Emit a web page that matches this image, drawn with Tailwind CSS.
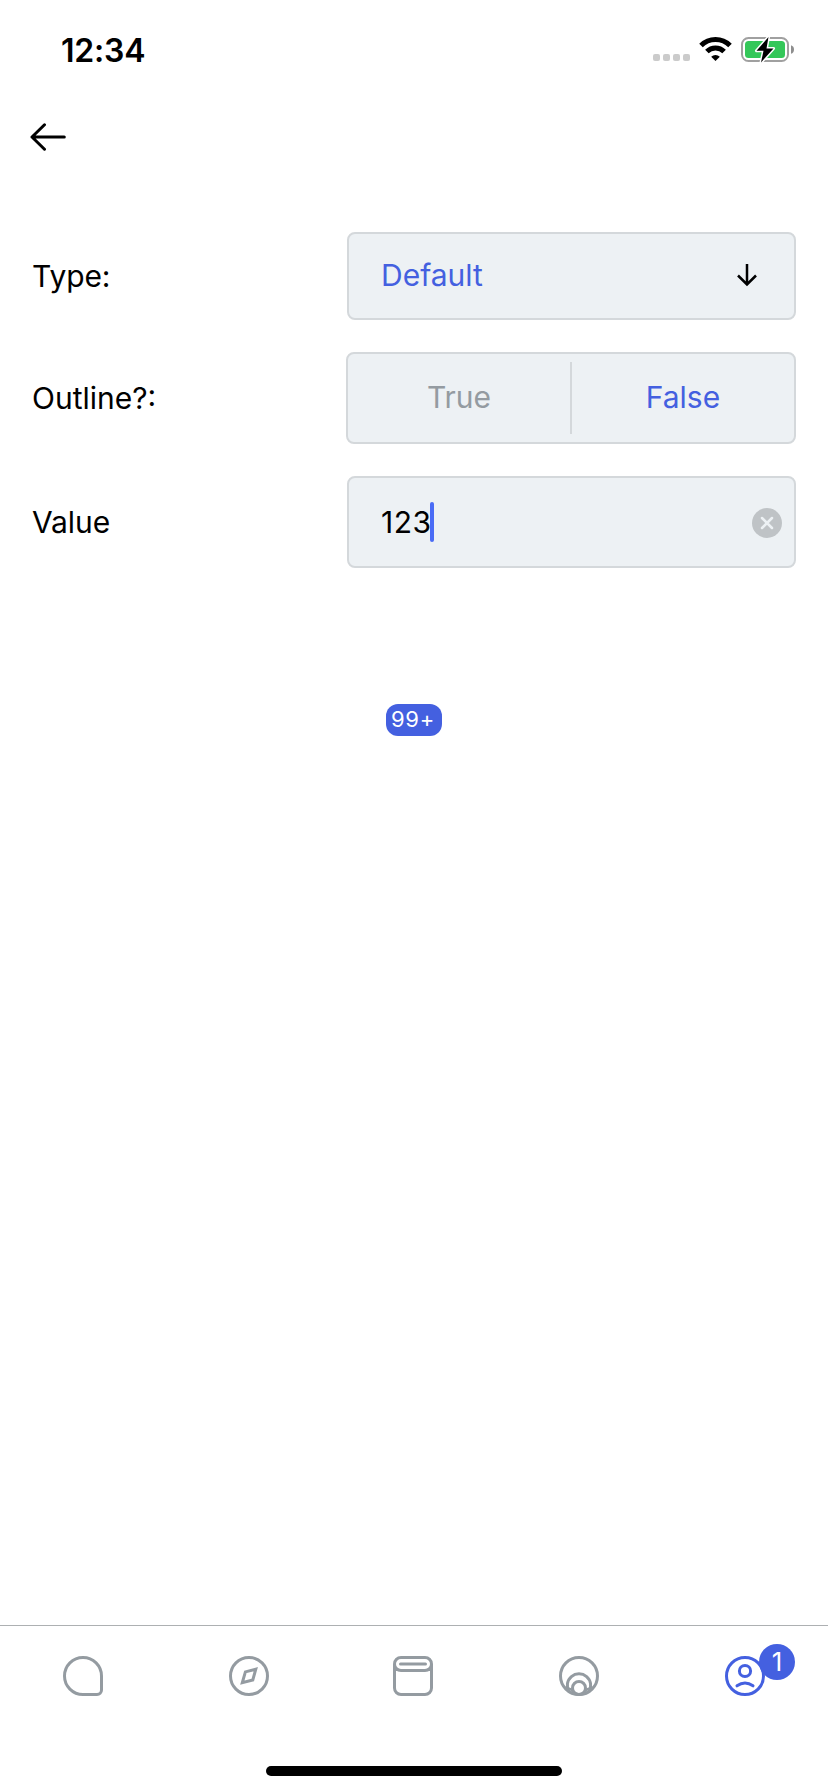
<!DOCTYPE html>
<html lang="en">
<head>
<meta charset="utf-8">
<title>Badge settings</title>
<script src="https://cdn.jsdelivr.net/npm/@tailwindcss/browser@4"></script>
</head>
<body class="w-[828px] h-[1792px] overflow-hidden bg-white flex flex-col text-black text-[30px] leading-[36px] font-normal antialiased font-['Inter',sans-serif]">
  <!-- Status bar -->
  <header class="h-[96px] shrink-0 flex items-start justify-between pl-[61px] pr-[34px]">
    <div class="pt-[31px] text-[32px] leading-[40px] font-semibold tracking-[-0.2px]">12:34</div>
    <div class="pt-[36px] flex items-start">
      <svg class="w-[38px] h-[28px]" viewBox="0 0 38 28" fill="#cbcbcb"><rect x="0" y="18" width="7" height="7" rx="2"/><rect x="10" y="18" width="7" height="7" rx="2"/><rect x="20" y="18" width="7" height="7" rx="2"/><rect x="30" y="18" width="7" height="7" rx="2"/></svg>
      <svg class="w-[34px] h-[28px] ml-[8px]" viewBox="0 0 34 28" fill="none" stroke="#000" stroke-width="5"><path d="M2 9.500a20.500 20.500 0 0 1 29 0"/><path d="M7.900 15.500a12.200 12.200 0 0 1 17.200 0"/><path d="M16.500 25l-4.300-4.300a6.200 6.200 0 0 1 8.600 0z" fill="#000" stroke="none"/></svg>
      <svg class="w-[54px] h-[28px] ml-[7px]" viewBox="0 0 54 28"><rect x="2" y="2" width="46" height="23" rx="6.500" fill="none" stroke="#a0a0a0" stroke-width="2"/><rect x="5" y="5" width="40" height="17" rx="3.500" fill="#34c759"/><path d="M51 9.200q3 1 3 4.300t-3 4.300z" fill="#8e8e8e"/><path d="M28.500 1L16.500 14.800h7L21 26.500L33.500 12.400h-7z" fill="#000" stroke="#fff" stroke-width="3" stroke-linejoin="round" paint-order="stroke"/></svg>
    </div>
  </header>

  <!-- Navigation -->
  <nav class="h-[136px] shrink-0 pl-[30px] pt-[26px]">
    <svg class="w-[36px] h-[30px]" viewBox="0 0 36 30" fill="none" stroke="#000" stroke-width="3" stroke-linecap="round" stroke-linejoin="round"><path d="M34.300 15H2M14.500 2.800L2 15l12.500 12.200"/></svg>
  </nav>

  <main class="flex-1 flex flex-col pr-[32px] pl-[32px]">
    <div class="flex flex-col gap-[32px]">
      <div class="flex items-center justify-between">
        <label class="tracking-[-0.1px]">Type:</label>
        <button class="w-[449px] h-[88px] rounded-[8px] border-2 border-[#d4d8db] bg-[#edf1f4] flex items-center justify-between pb-[2px] pl-[32px] pr-[36px] text-[#4460e0]">
          <span>Default</span>
          <svg class="w-[22px] h-[24px]" viewBox="0 0 22 24" fill="none" stroke="#000" stroke-width="2.500"><path d="M11 1v21M2 12.500l9 9 9-9"/></svg>
        </button>
      </div>
      <div class="flex items-center justify-between">
        <label>Outline?:</label>
        <div class="w-[450px] h-[92px] rounded-[8px] border-2 border-[#d4d8db] bg-[#edf1f4] flex items-center">
          <span class="w-[222px] pb-[2px] text-center text-[#949ba1]">True</span>
          <span class="w-[2px] h-[72px] bg-[#d4d8db]"></span>
          <span class="w-[222px] pb-[2px] text-center text-[#4460e0]">False</span>
        </div>
      </div>
      <div class="flex items-center justify-between">
        <label class="tracking-[-0.1px]">Value</label>
        <div class="w-[449px] h-[92px] rounded-[8px] border-2 border-[#d4d8db] bg-[#edf1f4] flex items-center pl-[32px] pr-[12px]">
          <span class="w-[49px] whitespace-nowrap tracking-[0.5px]">123</span>
          <span class="w-[4px] h-[40px] rounded-[2px] bg-[#4a6cf5]"></span>
          <svg class="w-[30px] h-[30px] ml-auto mt-[2px]" viewBox="0 0 30 30"><circle cx="15" cy="15" r="15" fill="#bfc3c6"/><path d="M10 10l10 10M20 10L10 20" stroke="#edf1f4" stroke-width="2.500" stroke-linecap="round"/></svg>
        </div>
      </div>
    </div>
    <div class="mt-[136px] self-center w-[56px] h-[32px] rounded-[12px] bg-[#4460e0] text-white text-[22px] leading-[30px] tracking-[0.7px] pl-[5px]">99+</div>
  </main>

  <!-- Tab bar -->
  <footer class="h-[167px] shrink-0 border-t border-[#adb0b2] flex flex-col items-center">
    <div class="w-full pt-[30px] grid grid-cols-[166px_166px_162px_170px_162px] justify-items-center text-[#949ba1]">
      <svg class="w-[40px] h-[40px]" viewBox="0 0 40 40" fill="none" stroke="currentColor" stroke-width="3"><path d="M20 38.500A18.500 18.500 0 1 1 38.500 20V34a4.500 4.500 0 0 1-4.500 4.500z"/></svg>
      <svg class="w-[40px] h-[40px]" viewBox="0 0 40 40" fill="none" stroke="currentColor" stroke-width="3"><circle cx="20" cy="20" r="18.500"/><path d="M26.800 13.200L16.400 15.900 13.300 26.700 23.800 24z"/></svg>
      <svg class="w-[40px] h-[40px]" viewBox="0 0 40 40" fill="none" stroke="currentColor" stroke-width="3"><rect x="1.500" y="1.500" width="37" height="37" rx="6.500"/><path d="M1.500 8a6.500 6.500 0 0 0 6.500 6.500h24a6.500 6.500 0 0 0 6.500-6.500M1.500 8v12M38.500 8v12"/><path d="M7.500 8h25" stroke-linecap="round"/></svg>
      <svg class="w-[40px] h-[40px]" viewBox="0 0 40 40" fill="none" stroke="currentColor" stroke-width="3"><circle cx="20" cy="20" r="18.500"/><path d="M10 35.500A11.700 11.700 0 1 1 30 35.500"/><circle cx="20" cy="32" r="6.500"/><path d="M6.500 30L13 32.500 14 37zM33.500 30L27 32.500 26 37z" fill="currentColor" stroke="none"/></svg>
      <div class="relative w-[40px] h-[40px] text-[#4460e0]">
        <svg class="w-[40px] h-[40px]" viewBox="0 0 40 40" fill="none" stroke="currentColor" stroke-width="3"><circle cx="20" cy="20" r="18.500"/><circle cx="20" cy="15" r="5.600"/><path d="M12 29.800q8-5.600 16 0" stroke-linecap="round"/></svg>
        <span class="absolute left-[34px] top-[-12px] w-[36px] h-[36px] rounded-full bg-[#4460e0] text-white text-[26px] leading-[36px] text-center">1</span>
      </div>
    </div>
    <div class="mt-[70px] w-[296px] h-[10px] rounded-full bg-black"></div>
  </footer>
</body>
</html>
